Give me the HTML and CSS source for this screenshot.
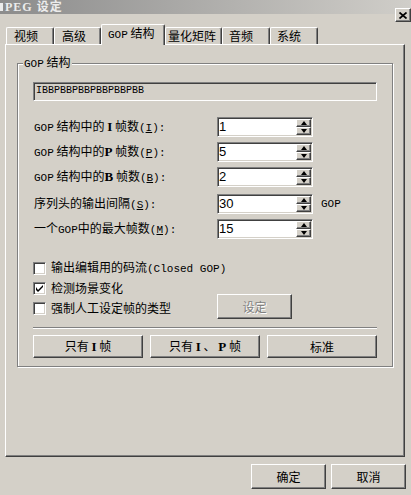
FILE: index.html
```html
<!DOCTYPE html>
<html lang="zh-CN">

<head>
    <meta charset="UTF-8">
    <title>MPEG 设定</title>
    <link rel="stylesheet" href="styles.css">
</head>

<body>
    <div class="window">
        <div class="titlebar"><span class="icon"></span><span class="title">PEG 设定</span></div>
        <div class="close">
            <svg width="8" height="7" viewBox="0 0 8 7"><path d="M0.5 0.5 L7.5 6.5 M7.5 0.5 L0.5 6.5" stroke="#000" stroke-width="1.7"/></svg>
        </div>

        <div class="tabs">
            <div class="tab t1">视频</div>
            <div class="tab t2">高级</div>
            <div class="tab active"><span class="lat">GOP</span> 结构</div>
            <div class="tab t4">量化矩阵</div>
            <div class="tab t5">音频</div>
            <div class="tab t6">系统</div>
        </div>

        <div class="panel">
            <fieldset class="group">
                <legend><span class="lat">GOP</span> 结构</legend>
                <div class="pattern">IBBPBBPBBPBBPBBPBB</div>

                <div class="rows">
                    <div class="row">
                        <label><span class="lat">GOP</span> 结构中的 <b>I</b> 帧数<span class="lat">(<u>I</u>):</span></label>
                        <div class="spin"><span class="val">1</span><span class="arrows"><span class="arr up"></span><span class="arr down"></span></span></div>
                    </div>
                    <div class="row">
                        <label><span class="lat">GOP</span> 结构中的<b>P</b> 帧数<span class="lat">(<u>P</u>):</span></label>
                        <div class="spin"><span class="val">5</span><span class="arrows"><span class="arr up"></span><span class="arr down"></span></span></div>
                    </div>
                    <div class="row">
                        <label><span class="lat">GOP</span> 结构中的<b>B</b> 帧数<span class="lat">(<u>B</u>):</span></label>
                        <div class="spin"><span class="val">2</span><span class="arrows"><span class="arr up"></span><span class="arr down"></span></span></div>
                    </div>
                </div>

                <div class="rows second">
                    <div class="row">
                        <label>序列头的输出间隔<span class="lat">(<u>S</u>):</span></label>
                        <div class="spin"><span class="val">30</span><span class="arrows"><span class="arr up"></span><span class="arr down"></span></span></div>
                        <span class="unit lat">GOP</span>
                    </div>
                    <div class="row">
                        <label>一个<span class="lat">GOP</span>中的最大帧数<span class="lat">(<u>M</u>):</span></label>
                        <div class="spin"><span class="val">15</span><span class="arrows"><span class="arr up"></span><span class="arr down"></span></span></div>
                    </div>
                </div>

                <div class="checks">
                    <div class="check">
                        <span class="box"></span>
                        <span class="text">输出编辑用的码流<span class="mono">(Closed GOP)</span></span>
                    </div>
                    <div class="check">
                        <span class="box"><svg width="7" height="7" viewBox="0 0 7 7"><path d="M0 2 L0 5 L2 7 L7 2 L7 0 L2 5 Z" fill="#000"/></svg></span>
                        <span class="text">检测场景变化</span>
                    </div>
                    <div class="check">
                        <span class="box"></span>
                        <span class="text wide">强制人工设定帧的类型</span>
                        <button class="btn disabled">设定</button>
                    </div>
                </div>

                <div class="sep"></div>

                <div class="presets">
                    <button class="btn">只有 <b>I</b> 帧</button>
                    <button class="btn">只有 <b>I</b> 、 <b>P</b> 帧</button>
                    <button class="btn">标准</button>
                </div>
            </fieldset>
        </div>

        <div class="dialog-buttons">
            <button class="btn">确定</button>
            <button class="btn">取消</button>
        </div>
    </div>
</body>

</html>
```

FILE: styles.css
```css
* {
    box-sizing: border-box;
}

body {
    margin: 0px;
    background-color: #d4d0c8;
    font: 12px/14px "Noto Sans CJK SC", sans-serif;
    color: #000;
}

.window {
    position: relative;
    width: 411px;
    height: 495px;
    overflow: hidden;
}

.titlebar {
    display: flex;
    align-items: center;
    height: 14px;
    background: linear-gradient(to right, #8c8c8c, #d0cec9);
    color: #ececec;
    font: bold 12px/14px "Liberation Serif", "Noto Sans CJK SC", serif;
    white-space: nowrap;
}

.icon {
    width: 3px;
    height: 8px;
    margin-right: 2px;
    background-color: #ececec;
}

.title {
    letter-spacing: 1px;
}

.close {
    position: absolute;
    left: 395px;
    top: 8px;
    width: 16px;
    height: 14px;
    display: flex;
    align-items: center;
    justify-content: center;
    background-color: #d4d0c8;
    border: 1px solid;
    border-color: #fff #404040 #404040 #fff;
    box-shadow: inset -1px -1px #808080;
}

.lat {
    font-family: "Liberation Mono", monospace;
    font-size: 11px;
}

.mono {
    font-family: "Liberation Mono", monospace;
    font-size: 11px;
}

b {
    font-family: "Liberation Serif", serif;
    font-size: 13px;
    font-weight: bold;
}

/* tabs */
.tabs {
    display: flex;
    align-items: flex-end;
    height: 30px;
    padding-left: 6px;
}

.tab {
    height: 17px;
    padding-left: 7px;
    line-height: 16px;
    border: 1px solid #fff;
    border-bottom: 0px;
    border-right-color: #404040;
    border-radius: 2px 2px 0 0;
    box-shadow: inset -1px 0 #808080;
}

.t1 { width: 48px; }
.t2 { width: 47px; }
.t4 { width: 57px; padding-left: 2px; }
.t5 { width: 48px; padding-left: 6px; }
.t6 { width: 48px; padding-left: 6px; }

.tab.active {
    position: relative;
    z-index: 1;
    width: 64px;
    height: 21px;
    margin-bottom: -1px;
    padding-left: 6px;
    line-height: 15px;
    background-color: #d4d0c8;
}

/* page */
.panel {
    margin-left: 5px;
    width: 400px;
    height: 413px;
    border: 1px solid;
    border-color: #fff #404040 #404040 #fff;
    box-shadow: inset -1px -1px #808080;
}

.group {
    margin: 10px 0 0 11px;
    padding: 11px 15px 8px 15px;
    width: 376px;
    min-width: 0;
    border: 1px solid #808080;
    box-shadow: 1px 1px #fff, inset 1px 1px #fff;
}

.group legend {
    margin-left: -10px;
    padding: 0 1px;
    line-height: 14px;
    background-color: #d4d0c8;
}

.pattern {
    height: 19px;
    padding-left: 2px;
    font: 10px/15px "Liberation Mono", monospace;
    border: 1px solid;
    border-color: #808080 #fff #fff #808080;
    box-shadow: inset 1px 1px #404040, inset -1px -1px #d4d0c8;
}

.rows {
    margin-top: 16px;
}

.rows.second {
    margin-top: 7px;
}

.row {
    display: flex;
    align-items: center;
    height: 20px;
    margin-bottom: 5px;
}

.row label {
    width: 184px;
    padding-left: 1px;
}

.spin {
    display: flex;
    align-items: center;
    justify-content: space-between;
    width: 96px;
    height: 20px;
    padding-left: 1px;
    background-color: #fff;
    border: 1px solid;
    border-color: #808080 #fff #fff #808080;
    box-shadow: inset 1px 1px #404040, inset -1px -1px #d4d0c8;
}

.val {
    font: 13px/16px "Liberation Sans", sans-serif;
}

.arrows {
    display: flex;
    flex-direction: column;
    width: 15px;
    height: 16px;
    margin-right: 1px;
}

.arr {
    flex: 1;
    display: flex;
    align-items: center;
    justify-content: center;
    background-color: #d4d0c8;
    border: 1px solid;
    border-color: #fff #404040 #404040 #fff;
    box-shadow: inset -1px -1px #808080;
}

.arr::after {
    content: '';
    width: 0;
    height: 0;
    border-left: 3.5px solid transparent;
    border-right: 3.5px solid transparent;
}

.up::after {
    border-bottom: 4px solid #000;
}

.down::after {
    border-top: 4px solid #000;
}

.unit {
    margin-left: 8px;
}

/* checkboxes */
.checks {
    margin-top: 19px;
}

.check {
    display: flex;
    align-items: center;
    height: 20px;
}

.box {
    display: flex;
    align-items: center;
    justify-content: center;
    width: 13px;
    height: 13px;
    margin-right: 5px;
    background-color: #fff;
    border: 1px solid;
    border-color: #808080 #fff #fff #808080;
    box-shadow: inset 1px 1px #404040, inset -1px -1px #d4d0c8;
}

.text.wide {
    width: 166px;
}

.btn {
    height: 23px;
    padding: 0px;
    font: 12px/14px "Noto Sans CJK SC", sans-serif;
    color: #000;
    background-color: #d4d0c8;
    border: 1px solid;
    border-color: #fff #404040 #404040 #fff;
    box-shadow: inset -1px -1px #808080;
}

.btn.disabled {
    width: 75px;
    height: 25px;
    margin: -4px 0 -1px 0;
    color: #808080;
    text-shadow: 1px 1px #fff;
}

.sep {
    margin-top: 9px;
    height: 2px;
    border-top: 1px solid #808080;
    border-bottom: 1px solid #fff;
}

.presets {
    display: flex;
    gap: 7px;
    margin-top: 6px;
}

.presets .btn {
    width: 110px;
}

.dialog-buttons {
    display: flex;
    justify-content: flex-end;
    gap: 5px;
    margin-top: 7px;
    padding-right: 5px;
}

.dialog-buttons .btn {
    width: 75px;
    height: 25px;
}
```
